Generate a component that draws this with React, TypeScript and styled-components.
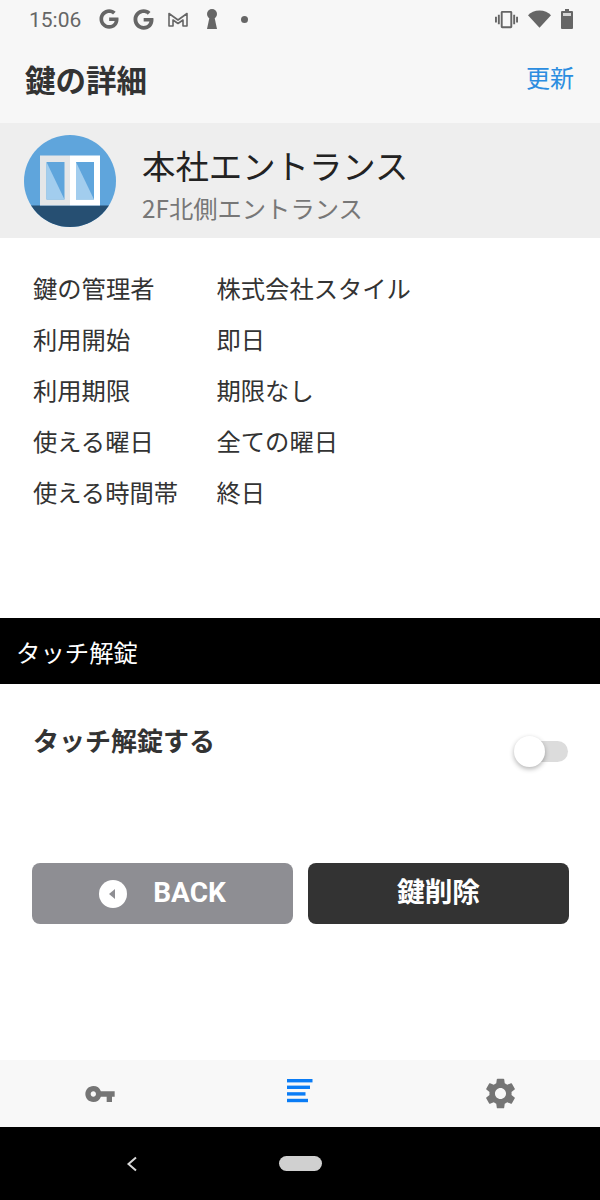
import styled, { createGlobalStyle } from "styled-components";
import { FaGoogle } from "react-icons/fa";
import { MdSettings, MdVibration, MdVpnKey } from "react-icons/md";

const details = [
  { label: "鍵の管理者", value: "株式会社スタイル" },
  { label: "利用開始", value: "即日" },
  { label: "利用期限", value: "期限なし" },
  { label: "使える曜日", value: "全ての曜日" },
  { label: "使える時間帯", value: "終日" },
];

const GlobalStyle = createGlobalStyle`
  html, body {
    margin: 0;
    padding: 0;
    background: #fff;
    font-family: "Noto Sans CJK JP", "Noto Sans", sans-serif;
  }
  * { box-sizing: border-box; }
`;

const DoorIcon = () => (
  <svg width="92" height="92" viewBox="0 0 92 92">
    <defs>
      <clipPath id="avatar-clip">
        <circle cx="46" cy="46" r="46" />
      </clipPath>
    </defs>
    <g clipPath="url(#avatar-clip)">
      <rect width="92" height="92" fill="#5fa5dc" />
      <rect y="70.5" width="92" height="22" fill="#264f72" />
      <rect x="16" y="20.5" width="30" height="50" fill="#e4e6e8" />
      <rect x="46" y="20.5" width="30" height="50" fill="#fff" />
      <rect x="22.5" y="27" width="18" height="37.5" fill="#5fa5dc" />
      <polygon points="22.5,27 40.5,64.5 22.5,64.5" fill="#a2cdee" />
      <rect x="52" y="27" width="18" height="37.5" fill="#5fa5dc" />
      <polygon points="52,27 70,64.5 52,64.5" fill="#a2cdee" />
    </g>
  </svg>
);

const BackIcon = () => (
  <svg width="28" height="28" viewBox="0 0 28 28">
    <circle cx="14" cy="14" r="14" fill="#fff" />
    <polygon points="16,9 16,19 10,14" fill="#8e8e93" />
  </svg>
);

const ListIcon = styled.svg.attrs({
  width: 26,
  height: 24,
  viewBox: "0 0 26 24",
  fill: "#0a7cf5",
})`
  margin-bottom: 5px;
`;

const App = () => {
  return (
    <>
      <GlobalStyle />
      <Screen>
        <TopArea>
          <StatusBar>
            <Clock>15:06</Clock>
            <NotifyIcons>
              <FaGoogle size={20} />
              <FaGoogle size={21} />
              <svg width="20" height="15" viewBox="0 0 20 15" fill="none" stroke="#666" strokeWidth="1.6">
                <path d="M1 14V1.5l9 6.5 9-6.5V14h-4V8l-5 3.5L5 8v6z" strokeLinejoin="round" />
              </svg>
              <Keyhole width="14" height="20" viewBox="0 0 14 20" fill="#666">
                <circle cx="7" cy="5" r="5" />
                <polygon points="5,6 9,6 12,20 2,20" />
              </Keyhole>
              <Dot />
            </NotifyIcons>
            <SystemIcons>
              <MdVibration size={23} />
              <svg width="23" height="18" viewBox="0 0 24 18" fill="#666">
                <path d="M12 18 0 5C3 2 7 0 12 0s9 2 12 5z" />
              </svg>
              <svg width="12" height="20" viewBox="0 0 12 20" fill="#666">
                <path d="M4 0h4v2h3a1 1 0 0 1 1 1v16a1 1 0 0 1-1 1H1a1 1 0 0 1-1-1V3a1 1 0 0 1 1-1h3z" />
                <rect x="2" y="4" width="8" height="3" fill="#d6d6d6" />
              </svg>
            </SystemIcons>
          </StatusBar>
          <Header>
            <HeaderTitle>鍵の詳細</HeaderTitle>
            <RefreshLink>更新</RefreshLink>
          </Header>
        </TopArea>

        <KeyCard>
          <DoorIcon />
          <KeyText>
            <KeyName>本社エントランス</KeyName>
            <KeyPlace>2F北側エントランス</KeyPlace>
          </KeyText>
        </KeyCard>

        <DetailList>
          {details.map((d) => (
            <DetailRow key={d.label}>
              <DetailLabel>{d.label}</DetailLabel>
              <span>{d.value}</span>
            </DetailRow>
          ))}
        </DetailList>

        <SectionBar>タッチ解錠</SectionBar>

        <TouchRow>
          <TouchLabel>タッチ解錠する</TouchLabel>
          <Toggle>
            <ToggleThumb />
          </Toggle>
        </TouchRow>

        <ButtonRow>
          <ActionButton $dark={false}>
            <BackIcon />
            <BackText>BACK</BackText>
          </ActionButton>
          <ActionButton $dark>鍵削除</ActionButton>
        </ButtonRow>

        <Spacer />

        <TabBar>
          <Tab><MdVpnKey size={32} color="#757575" /></Tab>
          <Tab>
            <ListIcon>
              <rect x="0" y="0" width="25.5" height="3.4" />
              <rect x="0" y="6.6" width="23" height="3.4" />
              <rect x="0" y="13.2" width="18.5" height="3.4" />
              <rect x="0" y="19.8" width="21" height="3.4" />
            </ListIcon>
          </Tab>
          <Tab><MdSettings size={37} color="#757575" /></Tab>
        </TabBar>

        <NavBar>
          <NavLeft>
            <svg width="12" height="16" viewBox="0 0 12 16" fill="none" stroke="#d8d8d8" strokeWidth="2">
              <path d="M11 1.5 3.5 8l7.5 6.5" />
            </svg>
          </NavLeft>
          <HomePill />
        </NavBar>
      </Screen>
    </>
  );
};

export default App;

const Screen = styled.div`
  width: 600px;
  height: 1200px;
  display: flex;
  flex-direction: column;
  background: #fff;
  overflow: hidden;
`;

const TopArea = styled.div`
  height: 123px;
  background: #f7f7f7;
`;

const StatusBar = styled.div`
  height: 40px;
  padding: 0 29px;
  display: flex;
  align-items: center;
  color: #666;
`;

const Clock = styled.span`
  font-family: Roboto, sans-serif;
  font-size: 21px;
  width: 70px;
`;

const NotifyIcons = styled.div`
  margin-bottom: 2px;
  display: flex;
  align-items: center;
  gap: 14px;
`;

const Keyhole = styled.svg`
  margin-left: 3px;
`;

const Dot = styled.span`
  width: 7px;
  height: 7px;
  margin-left: 8px;
  border-radius: 50%;
  background: #666;
`;

const SystemIcons = styled.div`
  margin-left: auto;
  margin-right: -2px;
  margin-bottom: 2px;
  display: flex;
  align-items: center;
  gap: 10px;
`;

const Header = styled.div`
  height: 83px;
  padding: 0 26px 6px 25px;
  display: flex;
  align-items: center;
  justify-content: space-between;
`;

const HeaderTitle = styled.h1`
  margin: 0;
  font-size: 30.5px;
  font-weight: 700;
  color: #333;
`;

const RefreshLink = styled.span`
  margin-bottom: 4px;
  font-size: 24px;
  color: #2b8de0;
`;

const KeyCard = styled.div`
  height: 115px;
  padding: 0 24px;
  display: flex;
  align-items: center;
  gap: 26px;
  background: #eeeeee;
`;

const KeyText = styled.div`
  padding-top: 7px;
  display: flex;
  flex-direction: column;
  gap: 3px;
`;

const KeyName = styled.span`
  font-size: 33.4px;
  line-height: 44px;
  color: #222;
`;

const KeyPlace = styled.span`
  font-size: 24.3px;
  line-height: 36px;
  color: #777;
`;

const DetailList = styled.div`
  height: 380px;
  padding: 24px 33px 0;
`;

const DetailRow = styled.div`
  height: 51px;
  display: flex;
  align-items: center;
  font-size: 24.3px;
  color: #333;
`;

const DetailLabel = styled.span`
  width: 183.5px;
`;

const SectionBar = styled.div`
  height: 66px;
  padding-left: 16px;
  display: flex;
  align-items: center;
  background: #000;
  color: #fff;
  font-size: 24.4px;
`;

const TouchRow = styled.div`
  height: 179px;
  padding: 34px 32px 0 33px;
  display: flex;
  align-items: flex-start;
  justify-content: space-between;
`;

const TouchLabel = styled.span`
  font-size: 26px;
  line-height: 44px;
  font-weight: 700;
  color: #333;
`;

const Toggle = styled.div`
  position: relative;
  width: 51px;
  height: 21px;
  margin-top: 23px;
  border-radius: 11px;
  background: #dcdcdc;
`;

const ToggleThumb = styled.span`
  position: absolute;
  left: -3px;
  top: -5px;
  width: 31px;
  height: 31px;
  border-radius: 50%;
  background: #fff;
  box-shadow: 0 2px 5px rgba(0, 0, 0, 0.3);
`;

const ButtonRow = styled.div`
  padding: 0 31px 0 32px;
  display: flex;
  gap: 15px;
`;

const ActionButton = styled.div<{ $dark: boolean }>`
  flex: 1;
  height: 61px;
  padding-bottom: ${(p) => (p.$dark ? "7px" : "0")};
  display: flex;
  align-items: center;
  justify-content: center;
  gap: 26px;
  border-radius: 8px;
  background: ${(p) => (p.$dark ? "#333" : "#8e8e93")};
  color: #fff;
  font-size: 27.7px;
  font-weight: 700;
`;

const BackText = styled.span`
  margin-bottom: 2px;
  font-family: Roboto, sans-serif;
  font-size: 28px;
`;

const Spacer = styled.div`
  flex: 1;
`;

const TabBar = styled.div`
  height: 67px;
  display: grid;
  grid-template-columns: repeat(3, 1fr);
  background: #f8f8f8;
`;

const Tab = styled.div`
  display: flex;
  align-items: center;
  justify-content: center;
`;

const NavBar = styled.div`
  height: 73px;
  display: flex;
  align-items: center;
  background: #000;
`;

const NavLeft = styled.div`
  flex: none;
  width: 279px;
  padding-left: 125px;
  display: flex;
`;

const HomePill = styled.div`
  flex: none;
  width: 43px;
  height: 15px;
  border-radius: 8px;
  background: #d0d0d0;
`;
